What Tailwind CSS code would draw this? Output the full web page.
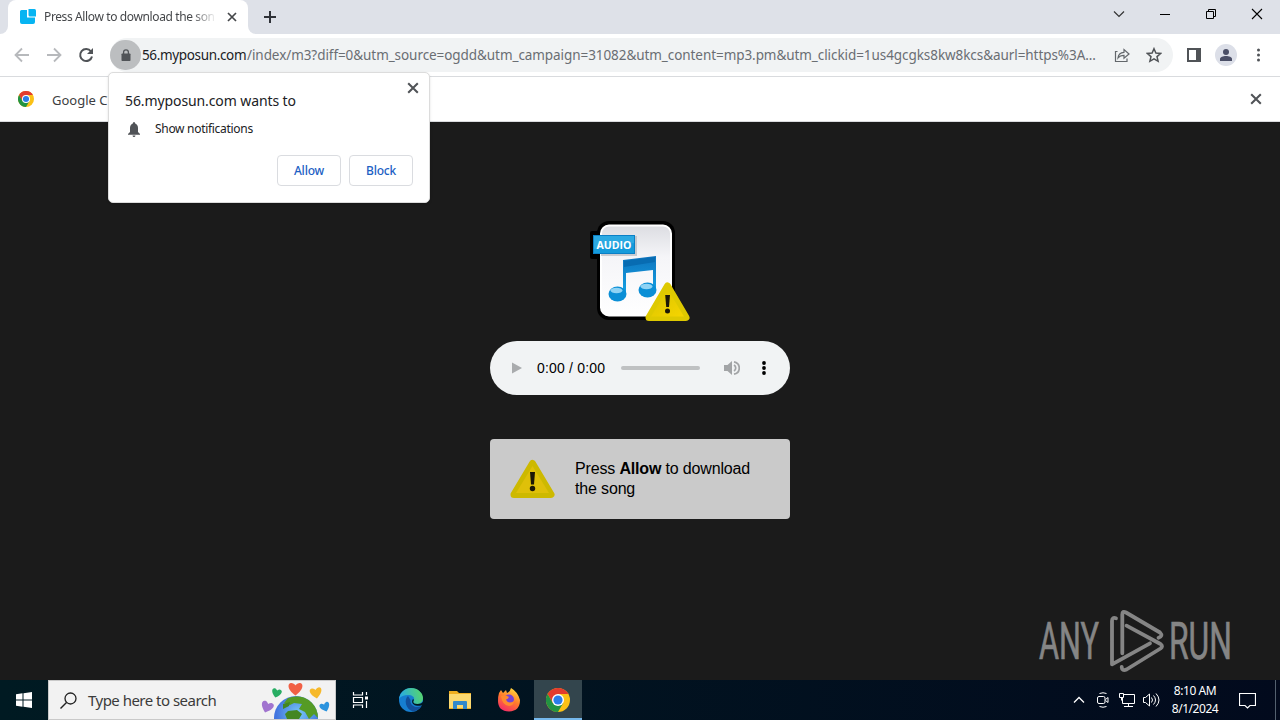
<!DOCTYPE html>
<html lang="en">
<head>
    <meta charset="UTF-8">
    <meta name="viewport" content="width=device-width, initial-scale=1.0">
    <title>Press Allow to download the song</title>
    <script src="https://cdn.jsdelivr.net/npm/@tailwindcss/browser@4"></script>
</head>
<body class="w-[1280px] h-[720px] overflow-hidden relative flex flex-col bg-[#1b1b1b] font-['Noto_Sans',sans-serif]">

    <!-- shared icons -->
    <svg class="absolute w-0 h-0">
      <defs>
        <linearGradient id="warn" x1="0" y1="0" x2="1" y2="1">
          <stop offset="0" stop-color="#d9c400"/><stop offset="1" stop-color="#f6d500"/>
        </linearGradient>
        <linearGradient id="note" x1="0" y1="0" x2="0" y2="1">
          <stop offset="0" stop-color="#0f74bd"/><stop offset="1" stop-color="#14a5e8"/>
        </linearGradient>
        <linearGradient id="paper" x1="0" y1="0" x2="0" y2="1">
          <stop offset="0" stop-color="#dcdde2"/><stop offset=".35" stop-color="#f5f5f8"/><stop offset="1" stop-color="#ffffff"/>
        </linearGradient>
      </defs>
      <symbol id="x" viewBox="0 0 10 10"><path d="M1 1l8 8M9 1L1 9" fill="none" stroke="currentColor" stroke-width="1.700"/></symbol>
      <symbol id="chrome" viewBox="0 0 24 24">
        <circle cx="12" cy="12" r="12" fill="#fbc116"/>
        <path d="M12 12L6.8 15 1.6 6A12 12 0 0 1 22.4 6H12z" fill="#e33b2e"/>
        <path d="M1.6 6A12 12 0 0 0 12 24l5.2-9L12 12l-5.2 3z" fill="#229342"/>
        <circle cx="12" cy="12" r="6" fill="#fff"/><circle cx="12" cy="12" r="4.600" fill="#2a7de9"/>
      </symbol>
    </svg>

    <!-- tab strip -->
    <div class="h-[34px] shrink-0 bg-[#dee1e8] flex">
      <div class="w-2 bg-white"><div class="h-full bg-[#dee1e8] rounded-br-lg"></div></div>
      <div class="w-60 bg-white rounded-t-lg flex items-center pl-3">
        <svg class="w-4 h-4 shrink-0" viewBox="0 0 16 16" fill="#06b4f2"><path d="M1.500 1H7v7.500h8V13a2 2 0 0 1-2 2H2a2 2 0 0 1-2-2V2.500A1.500 1.500 0 0 1 1.500 1z"/><path d="M8.500 0H14.500A1.500 1.500 0 0 1 16 1.500V7.500H10A1.500 1.500 0 0 1 8.500 6z"/></svg>
        <div class="ml-2 w-[173px] overflow-hidden whitespace-nowrap text-[12px] tracking-[-0.38px] text-[#45474a] mask-r-from-85%">Press Allow to download the son</div>
        <svg class="ml-[10px] w-[10px] h-[10px] text-[#45474a]"><use href="#x"/></svg>
      </div>
      <div class="w-2 bg-white"><div class="h-full bg-[#dee1e8] rounded-bl-lg"></div></div>
      <svg class="ml-2 mt-[11px] w-3 h-3" viewBox="0 0 12 12"><path d="M6 0v12M0 6h12" stroke="#2f3238" stroke-width="2"/></svg>
      <div class="ml-auto flex items-start text-black pt-2">
        <svg class="w-3 h-3 mr-[34px]" viewBox="0 0 12 12"><path d="M1 3.500l5 5 5-5" fill="none" stroke="#333" stroke-width="1.200"/></svg>
        <svg class="w-3 h-3 mr-[34px]" viewBox="0 0 12 12"><path d="M1 6.500h10" stroke="#000"/></svg>
        <svg class="w-3 h-3 mr-[34px]" viewBox="0 0 12 12"><path d="M1.500 3.500h7v7h-7zM3.500 3.500v-2h7v7h-2" fill="none" stroke="#000"/></svg>
        <svg class="w-3 h-3 mr-[17px]" viewBox="0 0 12 12"><path d="M1 1l10 10M11 1L1 11" stroke="#000" stroke-width="1.100"/></svg>
      </div>
    </div>

    <!-- toolbar -->
    <div class="h-[43px] shrink-0 bg-white border-b border-[#d9dbde] flex items-center">
      <svg class="ml-[14px] w-4 h-4" viewBox="0 0 16 16"><path d="M15 8H2M8 1.500L1.500 8 8 14.500" fill="none" stroke="#b7b9bc" stroke-width="1.800"/></svg>
      <svg class="ml-4 w-4 h-4" viewBox="0 0 16 16"><path d="M1 8h13M8 1.500L14.500 8 8 14.500" fill="none" stroke="#b7b9bc" stroke-width="1.800"/></svg>
      <svg class="ml-4 w-4 h-4" viewBox="0 0 16 16"><path d="M13 4.500A6 6 0 1 0 14 9.500" fill="none" stroke="#505357" stroke-width="2"/><path d="M15 1v6H9z" fill="#505357"/></svg>
      <div class="ml-4 w-[1063px] h-[34px] rounded-full bg-[#f1f3f4] flex items-center whitespace-nowrap">
        <div class="w-[31px] h-[30px] rounded-full bg-[#bcbec0] flex items-center justify-center shrink-0">
          <svg class="w-[10px] h-3" viewBox="0 0 10 12"><path d="M1.200 4.500h7.600q.7 0 .7.700v6q0 .7-.7.700H1.200q-.7 0-.7-.7v-6q0-.7.7-.7z" fill="#505357"/><path d="M2.600 5V3.200a2.400 2.400 0 0 1 4.800 0V5" fill="none" stroke="#505357" stroke-width="1.300"/></svg>
        </div>
        <div class="ml-px w-[105px] text-[13.5px] tracking-[-0.35px] text-[#202124]">56.myposun.com</div>
        <div class="w-[856px] text-[13.5px] tracking-[-0.07px] text-[#6a6e73]">/index/m3?diff=0&amp;utm_source=ogdd&amp;utm_campaign=31082&amp;utm_content=mp3.pm&amp;utm_clickid=1us4gcgks8kw8kcs&amp;aurl=https%3A...</div>
        <svg class="ml-[11px] w-4 h-4 shrink-0" viewBox="0 0 16 16" fill="none" stroke="#63676b" stroke-width="1.200"><path d="M3.500 4.500H1.500v10h11.500v-3"/><path d="M4 11c.3-4 2.500-5.500 6-5.700V2.500L15 7l-5 4.200V8.300C7.500 8.300 5.500 9 4 11z"/></svg>
        <svg class="ml-4 w-4 h-4 shrink-0" viewBox="0 0 16 16"><path d="M8 1.700l1.900 4.400 4.700.4-3.600 3.100 1.100 4.700L8 11.800l-4.100 2.500L5 9.600 1.400 6.500l4.700-.4z" fill="none" stroke="#505357" stroke-width="1.500"/></svg>
      </div>
      <svg class="ml-[14px] w-[14px] h-[14px]" viewBox="0 0 14 14"><path d="M1 1h12v12H1z" fill="none" stroke="#505357" stroke-width="2"/><path d="M9 1h5v12H9z" fill="#505357"/></svg>
      <div class="ml-[14px] w-[22px] h-[22px] rounded-full bg-[#dcdfe8] flex items-center justify-center">
        <svg class="w-3 h-3" viewBox="0 0 12 12" fill="#4a4e66"><circle cx="6" cy="3" r="3"/><path d="M0 12V10c0-2 3-3 6-3s6 1 6 3v2z"/></svg>
      </div>
      <svg class="ml-[20px] w-1 h-[14px]" viewBox="0 0 4 14" fill="#505357"><circle cx="1.500" cy="2" r="1.500"/><circle cx="1.500" cy="7" r="1.500"/><circle cx="1.500" cy="12" r="1.500"/></svg>
    </div>

    <!-- info bar -->
    <div class="h-[45px] shrink-0 bg-white border-b border-[#d9dbde] flex items-center pl-[18px] pr-[18px]">
      <svg class="w-4 h-4"><use href="#chrome"/></svg>
      <div class="ml-[18px] text-[13px] leading-5 pt-px text-[#3c3e42]">Google C</div>
      <svg class="ml-auto w-3 h-3 text-[#505357]"><use href="#x"/></svg>
    </div>

    <!-- page -->
    <div class="grow flex flex-col items-center pt-[97px] relative">
      <svg class="w-[102px] h-[104px] shrink-0" viewBox="0 0 102 104">
        <rect x="8" y="2" width="78" height="99" rx="12" fill="#000"/>
        <rect x="1" y="12" width="44" height="28" rx="2" fill="#000"/>
        <rect x="12" y="6.500" width="70" height="90" rx="8" fill="url(#paper)" stroke="#fff" stroke-width="2"/>
        <rect x="12" y="17" width="36" height="20" fill="#aeb1b8" opacity=".6"/>
        <rect x="4.500" y="16.500" width="41" height="18" fill="#159bdb" stroke="#0b80c6"/>
        <path d="M5 17h40v7L5 30z" fill="#2ba9e2"/>
        <text x="7.500" y="30" font-family="Open Sans, sans-serif" font-weight="700" font-size="11" fill="#fff" textLength="35" lengthAdjust="spacingAndGlyphs">AUDIO</text>
        <path d="M34 41l33-4v34h-3V51l-27 3v22h-3z" fill="url(#note)"/>
        <path d="M35 42l31-4v5l-31 5z" fill="#086cb2"/>
        <ellipse cx="28.500" cy="75" rx="9" ry="7.500" fill="#0b8fd6"/><ellipse cx="27.500" cy="71.500" rx="6" ry="2.800" fill="#8fd3f4"/>
        <ellipse cx="58.500" cy="71" rx="9" ry="7.500" fill="#0b8fd6"/><ellipse cx="57.500" cy="67.500" rx="6" ry="2.800" fill="#8fd3f4"/>
        <path d="M78.500 67L97 98.500H60z" fill="#f0d000" stroke="#dec900" stroke-width="7" stroke-linejoin="round"/>
        <path d="M78.500 70L95 97.500H62z" fill="url(#warn)"/>
        <path d="M76.200 76h4.800l-1 12h-2.800z" fill="#1b1707"/><circle cx="78.500" cy="92" r="2.500" fill="#1b1707"/>
      </svg>

      <!-- audio player -->
      <div class="mt-[18px] w-[300px] h-[54px] shrink-0 rounded-full bg-[#f1f3f4] flex items-center font-['Liberation_Sans',sans-serif]">
        <svg class="ml-[22px] w-[10px] h-3" viewBox="0 0 10 12"><path d="M0 .5l10 5.500-10 5.500z" fill="#a9abad"/></svg>
        <div class="ml-[15px] w-[84px] text-[14px] tracking-[0.18px] text-black whitespace-nowrap">0:00 / 0:00</div>
        <div class="w-[79px] h-1 rounded-full bg-[#bfc1c2]"></div>
        <svg class="ml-6 w-4 h-4" viewBox="0 0 16 16"><path d="M0 5h3.500L8 1v14l-4.500-4H0z" fill="#a2a4a6"/><path d="M10 5c2.300 1.500 2.300 4.500 0 6M10 1.800c7 1.500 7 10.900 0 12.400" fill="none" stroke="#a2a4a6" stroke-width="1.700"/></svg>
        <svg class="ml-[22px] w-1 h-[14px]" viewBox="0 0 4 14"><circle cx="2" cy="2" r="1.900"/><circle cx="2" cy="7" r="1.900"/><circle cx="2" cy="12" r="1.900"/></svg>
      </div>

      <!-- download hint -->
      <div class="mt-11 w-[300px] h-20 shrink-0 rounded bg-[#cacaca] flex items-center pl-5 font-['Liberation_Sans',sans-serif]">
        <svg class="w-[45px] h-10" viewBox="0 0 45 40">
          <path d="M22.500 4.500L41 35.500H4z" fill="#d8bc0b" stroke="#cdb900" stroke-width="7" stroke-linejoin="round"/>
          <path d="M22.500 7L39 34H6z" fill="#dfc009"/>
          <path d="M20 13h5l-1 12.500h-3z" fill="#1b1707"/><circle cx="22.500" cy="29.500" r="2.700" fill="#1b1707"/>
        </svg>
        <p class="ml-5 text-base leading-5 tracking-[-0.16px] text-black">Press <b>Allow</b> to download<br>the song</p>
      </div>

      <!-- watermark -->
      <svg class="absolute right-[40px] bottom-[4px] w-[204px] h-[70px]" viewBox="0 0 204 70" font-family="Roboto, sans-serif" font-size="51" fill="#858585" stroke="#858585" stroke-width=".7">
        <text x="3" y="53" textLength="60" lengthAdjust="spacingAndGlyphs">ANY</text>
        <text x="133" y="53" textLength="63" lengthAdjust="spacingAndGlyphs">RUN</text>
        <g fill="none" stroke="#858585" stroke-width="3.800" stroke-linecap="round" stroke-linejoin="round">
          <path d="M80 12.300q-4-1.300-4 2.700V58.300L114 37.300"/>
          <path d="M86.300 47.300V8.500q0-4 3.700-2L124 26.500q3.500 3.500-1.500 5.200"/>
          <path d="M90.500 19.700L124.500 38q3 2 0 4.500L90.500 63.500q-4.500 2-4.800-2.500"/>
        </g>
      </svg>
    </div>

    <!-- taskbar -->
    <div class="h-10 shrink-0 bg-linear-to-r from-[#001a22] to-[#020a1d] flex items-center">
      <div class="w-12 flex justify-center">
        <svg class="w-4 h-4" viewBox="0 0 16 16" fill="#fff"><path d="M0 2.300l6.500-1V7.500H0zM7.500 1.200L16 0v7.500H7.500zM0 8.500h6.500v6.200L0 13.800zM7.500 8.500H16V16l-8.500-1.200z"/></svg>
      </div>
      <div class="w-[288px] h-10 bg-[#f2f2f2] border border-[#c9c9c9] flex items-center pl-[11px]">
        <svg class="w-[17px] h-[17px]" viewBox="0 0 17 17"><circle cx="10.500" cy="6.500" r="5.500" fill="none" stroke="#222" stroke-width="1.300"/><path d="M6.500 10.500L.5 16.500" stroke="#222" stroke-width="1.400"/></svg>
        <div class="ml-[11px] w-[172px] text-[15px] tracking-[-0.52px] text-[#3b3b3b] whitespace-nowrap">Type here to search</div>
        <svg class="w-[70px] h-[38px] shrink-0" viewBox="0 0 70 38">
          <defs>
            <path id="heart" d="M0 6.500C-9 0-8-6-4-6-1.500-6 0-3.500 0-3.500S1.500-6 4-6C8-6 9 0 0 6.500z"/>
            <radialGradient id="sea" cx=".55" cy=".4"><stop offset="0" stop-color="#78c8f5"/><stop offset="1" stop-color="#4275df"/></radialGradient>
            <clipPath id="globe"><circle cx="36" cy="37" r="22"/></clipPath>
          </defs>
          <circle cx="36" cy="37" r="22" fill="url(#sea)"/>
          <g clip-path="url(#globe)" fill="#559b25">
            <path d="M28 17q12-4 21 1 10 8 10 20l-5-5-5 5-4-7-6-3 3-5-8-1-4 2-6-2z"/>
            <path d="M23 23l7-2-1 4-6 3zM28 30l9-1 5 4-3 5H27l-2-5z" fill="#438622"/>
          </g>
          <use href="#heart" transform="translate(35.500 8)" fill="#f16045"/>
          <use href="#heart" transform="translate(16.500 12) rotate(15) scale(.7)" fill="#28ad63"/>
          <use href="#heart" transform="translate(56 12) rotate(-10) scale(.85)" fill="#f6b92a"/>
          <use href="#heart" transform="translate(7 26) rotate(20) scale(.88)" fill="#a174cf"/>
          <use href="#heart" transform="translate(65 26) rotate(-20) scale(.72)" fill="#2b93de"/>
        </svg>
      </div>

      <div class="w-12 flex justify-center">
        <svg class="w-[17px] h-4" viewBox="0 0 17 16" fill="none" stroke="#fff" stroke-width="1.200"><path d="M1.500 0v3h9V0M1.500 5.500h9v5h-9zM1.500 16v-3h9v3M14.500 0v3M14.500 9v7"/><path d="M13 4.500h3v3h-3z" fill="#fff" stroke="none"/></svg>
      </div>
      <div class="w-[54px] flex justify-center">
        <svg class="w-6 h-6" viewBox="0 0 24 24">
          <defs>
            <linearGradient id="e1" x1="0" y1=".5" x2="1" y2=".3"><stop offset="0" stop-color="#26a9e8"/><stop offset="1" stop-color="#57d66a"/></linearGradient>
          </defs>
          <circle cx="12" cy="12" r="12" fill="#167ed0"/>
          <path d="M0 11C1 4 6 0 12 0c7 0 12 5 12 10 0 4-3 6-6 6-4 0-5-2-3-4 1-3-2-5-6-5-4 0-7 1-9 4z" fill="url(#e1)"/>
          <path d="M9 8c-4 3-3 13 5 15.500 4-.5 7-3 8.500-5.500-6 3-12-1-11-6z" fill="#114f9b"/>
          <path d="M14 11c-3 4 2 8 8 6.500l2.500-.5v-4c-1 2-3 3-6 3-4 0-5-2-3.500-4z" fill="#001721"/>
        </svg>
      </div>
      <div class="w-11 flex justify-center">
        <svg class="w-[22px] h-[18px]" viewBox="0 0 22 18"><path d="M0 0h8l2 2h12v16H0z" fill="#efae20"/><path d="M0 3h22v14H0z" fill="#fcd970"/><path d="M4 18v-7q0-1 1-1h12q1 0 1 1v7h-4v-4H8v4z" fill="#3389cb"/></svg>
      </div>
      <div class="w-[52px] pl-[2px] flex justify-center">
        <svg class="w-6 h-6" viewBox="0 0 24 24">
          <defs><linearGradient id="fx" x1=".8" y1="0" x2=".3" y2="1"><stop offset="0" stop-color="#ffe03d"/><stop offset=".5" stop-color="#ff7b2c"/><stop offset="1" stop-color="#f52c66"/></linearGradient></defs>
          <path d="M2 5l2-3 2 3 3-3 1 3q3-1 4-5 7 4 9 12 0 11-11 11.500Q1 23 1 13q0-5 1-8z" fill="url(#fx)"/>
          <circle cx="12" cy="11.500" r="5" fill="#7543d4"/>
          <path d="M4 8q4-2 8 1-1 2-3 2.500 1 3 4 3 3 0 4-2 0 5-5 5.500-7-1-8-10z" fill="#ff8a2e"/>
        </svg>
      </div>
      <div class="w-12 h-10 bg-[#33454d] border-b-2 border-[#76b9ed] flex items-center justify-center">
        <svg class="w-6 h-6 mt-[2px]"><use href="#chrome"/></svg>
      </div>

      <div class="ml-auto h-10 flex items-center text-white">
        <svg class="w-3 h-2" viewBox="0 0 12 8"><path d="M1 6.500l5-5 5 5" fill="none" stroke="#fff" stroke-width="1.300"/></svg>
        <svg class="ml-3 w-3 h-4" viewBox="0 0 12 16" fill="none" stroke="#fff"><rect x=".5" y="4.500" width="7.500" height="7" rx="1.500"/><path d="M8.500 7.500l2.500-2v5l-2.500-2M2.500 1.500q3.500-1.500 7 0M2.500 14.500q3.500 1.500 7 0"/></svg>
        <svg class="ml-[10px] w-4 h-4" viewBox="0 0 16 16" fill="none" stroke="#fff"><path d="M5 2.500h10.500v9H3.500V6M9.500 11.500v3M5 14.500h9M.5 1.500h4v4h-4zM2.500 5.500v3"/></svg>
        <svg class="ml-2 w-[17px] h-4" viewBox="0 0 17 16" fill="none" stroke="#fff"><path d="M.5 5.500h2L6.500 2v12l-4-3.500h-2zM8.500 5.500q2 2.500 0 5M10.500 3.500q4 4.500 0 9M13 1.500q6 6.500 0 13"/></svg>
        <div class="ml-2 w-[54px] text-center text-[12px] leading-[18px] tracking-[-0.45px] whitespace-nowrap">8:10 AM<br>8/1/2024</div>
        <svg class="ml-[17px] w-[17px] h-[17px]" viewBox="0 0 17 17"><path d="M.5 1.500h16v12h-5.500l-2.500 2.500L6 13.500H.5z" fill="none" stroke="#fff" stroke-width="1.200"/></svg>
        <div class="ml-[19px] w-px h-10 bg-[#53606f]"></div>
        <div class="w-1"></div>
      </div>
    </div>

    <!-- permission prompt -->
    <div class="absolute left-[108px] top-[72px] w-[322px] h-[131px] bg-white rounded-[5px] border border-[#dcdcdc] shadow-sm pl-4 pr-4">
      <svg class="absolute right-[10px] top-[9px] w-3 h-3 text-[#505357]"><use href="#x"/></svg>
      <div class="mt-[18px] text-[14px] leading-5 tracking-[-0.1px] text-[#202124]">56.myposun.com wants to</div>
      <div class="mt-2 flex items-center">
        <svg class="ml-[3px] w-3 h-[15px]" viewBox="0 0 12 15" fill="#505357"><path d="M6 0q1.200 0 1.200 1.500Q10 2.500 10 6v4l2 2v.7H0V12l2-2V6q0-3.500 2.800-4.500Q4.800 0 6 0zM4.500 13.500h3Q7.300 15 6 15t-1.500-1.500z"/></svg>
        <div class="ml-[15px] text-[12px] leading-5 tracking-[-0.3px] text-[#202124]">Show notifications</div>
      </div>
      <div class="mt-4 flex justify-end gap-2 text-[12px] font-medium tracking-[-0.2px] text-[#1d5fc4]">
        <button class="w-16 h-[31px] border border-[#dadce0] rounded">Allow</button>
        <button class="w-16 h-[31px] border border-[#dadce0] rounded">Block</button>
      </div>
    </div>
</body>
</html>
